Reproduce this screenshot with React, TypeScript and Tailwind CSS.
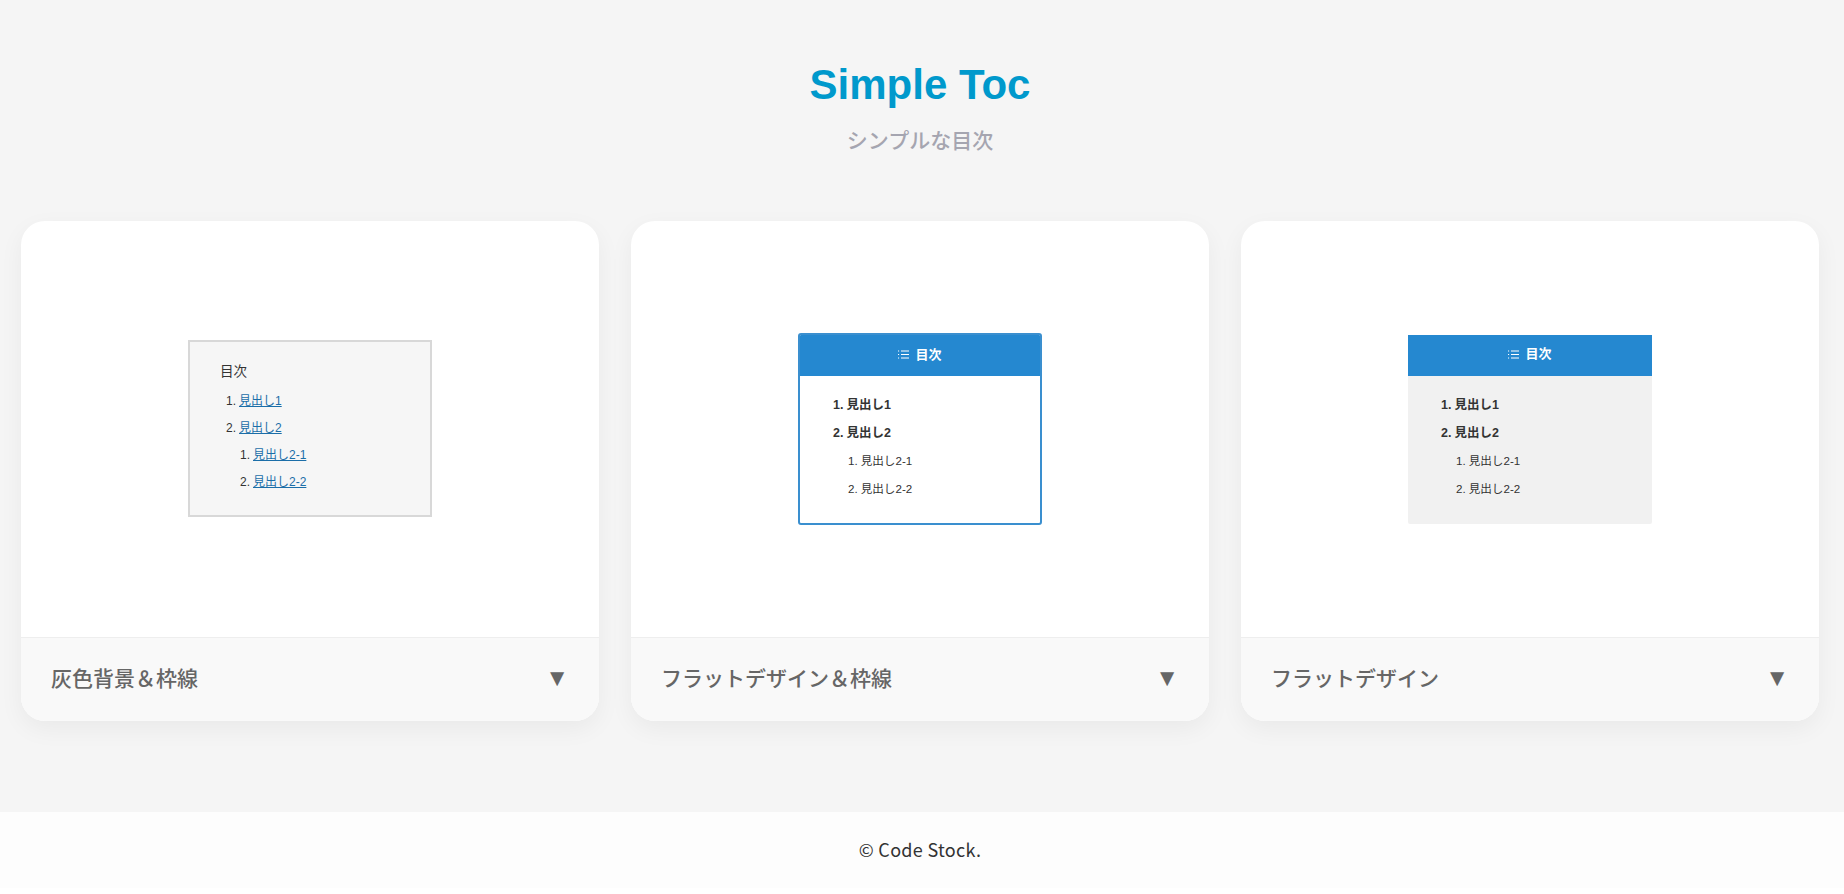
const cjk = "font-['Liberation_Sans','Noto_Sans_CJK_JP',sans-serif]";

function ListIcon() {
  return (
    <svg width="11" height="9" viewBox="0 0 11 9" fill="none" className="shrink-0">
      <path d="M0 1h1.5M0 4.5h1.5M0 8h1.5" stroke="#fff" strokeWidth="1" strokeDasharray="1 0.4" />
      <path d="M3 1h8M3 4.5h8M3 8h8" stroke="#fff" strokeWidth="1" />
    </svg>
  );
}

type TocRowProps = { num: string; label: string; linked?: boolean; bold?: boolean };

function TocRow({ num, label, linked, bold }: TocRowProps) {
  return (
    <li className={`flex justify-end gap-[3px] ${bold ? "font-bold" : ""}`}>
      <span>{num}</span>
      <span className={linked ? "text-[#1b6ea8] underline" : ""}>{label}</span>
    </li>
  );
}

function GrayList() {
  return (
    <ol className="flex flex-col gap-[9px] text-[12px] leading-[18px] text-[#333]">
      <div className="flex w-fit flex-col gap-[9px]">
        <TocRow num="1." label="見出し1" linked />
        <TocRow num="2." label="見出し2" linked />
      </div>
      <div className="ml-[14px] flex w-fit flex-col gap-[9px]">
        <TocRow num="1." label="見出し2-1" linked />
        <TocRow num="2." label="見出し2-2" linked />
      </div>
    </ol>
  );
}

function BoldList() {
  return (
    <ol className="flex flex-col gap-[10px] text-[12.5px] leading-[18px] text-[#333]">
      <div className="flex w-fit flex-col gap-[10px]">
        <TocRow num="1." label="見出し1" bold />
        <TocRow num="2." label="見出し2" bold />
      </div>
      <div className="ml-[15px] flex w-fit flex-col gap-[10px] text-[11.6px]">
        <TocRow num="1." label="見出し2-1" />
        <TocRow num="2." label="見出し2-2" />
      </div>
    </ol>
  );
}

function TocHeader() {
  return (
    <div className="flex h-[41px] items-center justify-center gap-[6px] bg-[#2588d0] pb-[2px] text-[13px] font-bold text-white">
      <ListIcon />
      <span>目次</span>
    </div>
  );
}

function GrayToc() {
  return (
    <div className="mb-[1px] h-[177px] w-[244px] border-2 border-[#d8d8d8] bg-[#f6f6f6] pl-[30px] pt-[20px]">
      <p className="mb-[11px] text-[13.5px] leading-[19px] text-[#333]">目次</p>
      <div className="pl-[6px]">
        <GrayList />
      </div>
    </div>
  );
}

function FlatBorderToc() {
  return (
    <div className="h-[192px] w-[244px] overflow-hidden rounded-[3px] border-2 border-[#3a8fcf] bg-white">
      <TocHeader />
      <div className="pl-[33px] pt-[20px]">
        <BoldList />
      </div>
    </div>
  );
}

function FlatToc() {
  return (
    <div className="h-[189px] w-[244px] overflow-hidden rounded-b-[2px] bg-[#f1f1f1]">
      <TocHeader />
      <div className="pl-[33px] pt-[20px]">
        <BoldList />
      </div>
    </div>
  );
}

function Card({ title, children }: { title: string; children: React.ReactNode }) {
  return (
    <article className="flex h-[500px] flex-col overflow-hidden rounded-[24px] bg-white shadow-[0_8px_24px_rgba(0,0,0,0.05)]">
      <div className="flex flex-1 items-center justify-center">{children}</div>
      <div className="flex h-[84px] items-center justify-between border-t border-[#eeeeee] bg-[#f9f9f9] pb-[4px] pl-[30px] pr-[30px]">
        <span className="font-['Noto_Sans_CJK_JP',sans-serif] text-[21px] font-medium text-[#666]">{title}</span>
        <span className="text-[24px] leading-none text-[#666]">▼</span>
      </div>
    </article>
  );
}

export default function App() {
  return (
    <div className={`min-h-[894px] bg-white ${cjk}`}>
      <div className="bg-[#f5f5f5] pb-[91px]">
        <header className="pr-[4px] pt-[57px] text-center">
          <h1 className="text-[42px] font-bold leading-[56px] text-[#0099cc]">Simple Toc</h1>
          <p className="mt-[11px] font-['Noto_Sans_CJK_JP',sans-serif] text-[21px] font-medium leading-[30px] text-[#a5a5b0]">シンプルな目次</p>
        </header>
        <main className="mt-[67px] grid grid-cols-3 gap-[32px] pl-[21px] pr-[25px]">
          <Card title="灰色背景＆枠線"><GrayToc /></Card>
          <Card title="フラットデザイン＆枠線"><FlatBorderToc /></Card>
          <Card title="フラットデザイン"><FlatToc /></Card>
        </main>
      </div>
      <footer className="flex h-[76px] items-center justify-center bg-[#fdfdfd] pb-[2px] pr-[4px] font-['Noto_Sans_CJK_JP',sans-serif] text-[18px] tracking-[0.3px] text-[#333]">© Code Stock.</footer>
    </div>
  );
}
